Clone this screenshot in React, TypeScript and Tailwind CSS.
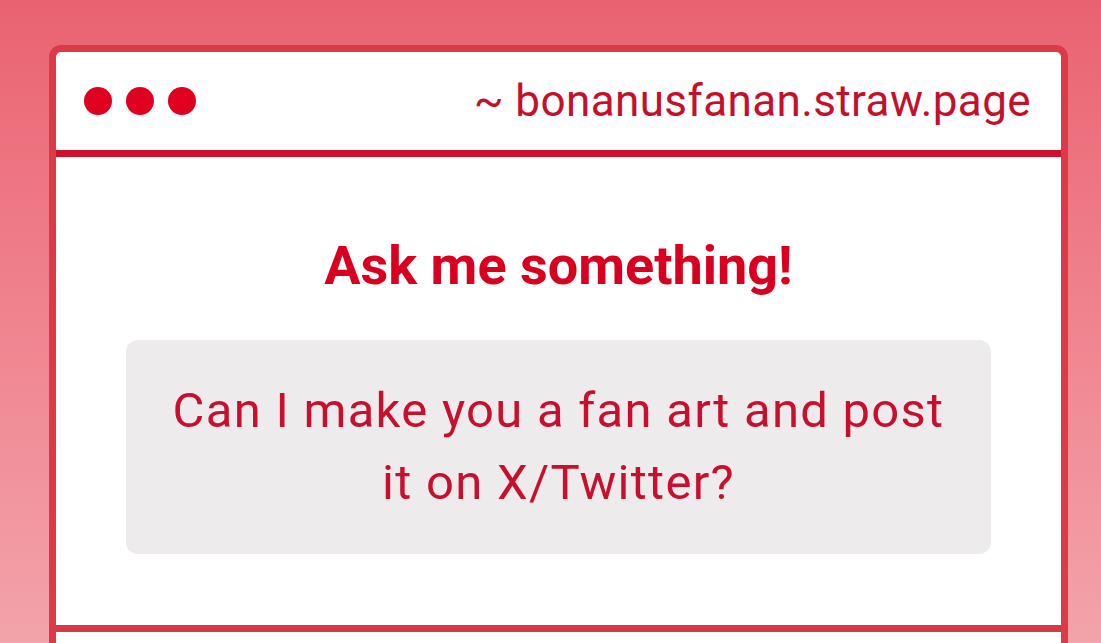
export default function App() {
  return (
    <div
      className="h-[643px] w-full overflow-hidden bg-gradient-to-b from-[#ea6272] to-[#f3a3ab] pl-[49px] pr-[33px] pt-[45px]"
      style={{ fontFamily: "Roboto, 'Noto Sans', sans-serif" }}
    >
      <div className="rounded-t-[12px] border-[7px] border-[#dd3a47] bg-white">
        {/* window header */}
        <div className="flex h-[98px] items-center justify-between pl-[28px] pr-[30px]">
          <div className="flex gap-[14px]">
            <span className="h-[28px] w-[28px] rounded-full bg-[#e0001f]" />
            <span className="h-[28px] w-[28px] rounded-full bg-[#e0001f]" />
            <span className="h-[28px] w-[28px] rounded-full bg-[#e0001f]" />
          </div>
          <span className="text-[44px] leading-none tracking-[0.4px] text-[#c4102c]">~ bonanusfanan.straw.page</span>
        </div>
        <div className="h-[7px] bg-[#d0102a]" />

        {/* body */}
        <div className="flex flex-col items-center px-[70px] pb-[71px] pt-[77px]">
          <h1 className="text-[54px] font-bold leading-[1.2] text-[#d9001f]">Ask me something!</h1>
          <div className="mt-[41px] w-full rounded-[12px] bg-[#edebec] px-[20px] py-[35px] text-center text-[49px] leading-[72px] tracking-[1.27px] text-[#c8102e]">
            Can I make you a fan art and post
            <br />
            it on X/Twitter?
          </div>
        </div>
        <div className="h-[7px] bg-[#d43a46]" />
        <div className="h-[200px]" />
      </div>
    </div>
  );
}
